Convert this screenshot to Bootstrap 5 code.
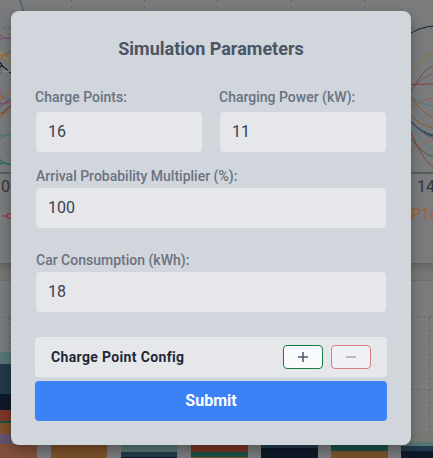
<!DOCTYPE html>
<html lang="en">
<head>
<meta charset="utf-8">
<meta name="viewport" content="width=device-width, initial-scale=1">
<title>Simulation Parameters</title>
<link href="https://cdn.jsdelivr.net/npm/bootstrap@5.3.0/dist/css/bootstrap.min.css" rel="stylesheet">
<style>
body{font-family:Roboto,"Liberation Sans",sans-serif;background:#797b7c;height:458px;overflow:hidden}
.backdrop-chart{z-index:0;width:433px;height:458px}
.sim-dialog{z-index:1;width:400px;height:434px;margin:11px 0 0 11px;padding:24px;background:#d1d5dc;border-radius:8px;box-shadow:0 5px 12px rgba(0,0,0,.32)}
.sim-title{font-size:18px;line-height:28px;color:#4b5563;margin-bottom:24px}
.sim-label{display:block;font-size:14px;line-height:20px;font-weight:500;color:#6b7280}
.pair .sim-label{margin:0 0 5px -1px}
.wide-field{padding:0 1px}
.wide-field .sim-label{line-height:18px;padding-bottom:3px}
.sim-input,.sim-input:focus{height:40px;padding:0 12px;border:0;border-radius:4px;background:#e5e7eb;color:#374151;font-size:16px;line-height:40px;box-shadow:none}
.pair{gap:18px;padding:0 1px}
.arrival-field{margin-top:15px}
.car-field{margin-top:23px}
.config-row{height:40px;margin-top:25px;padding:0 16px;background:#e5e7eb;border-radius:4px}
.config-name{font-size:14px;color:#1f2937;letter-spacing:.35px}
.step-btn{width:40px;height:24px;padding:0;border-radius:4px;background:#f9fafb;display:flex;align-items:center;justify-content:center}
.step-plus{border:1px solid #15803d}
.step-minus,.step-minus:disabled{border:1px solid #d97d80;background:#f0f1f4;opacity:1}
.submit-btn,.submit-btn:hover{height:40px;margin-top:4px;padding:0;border:0;border-radius:4px;background:#3b82f6;color:#fff;font-size:16px;font-weight:700}
</style>
<script src="https://cdn.jsdelivr.net/npm/bootstrap@5.3.0/dist/js/bootstrap.bundle.min.js"></script>
</head>
<body class="position-relative">
<svg class="backdrop-chart position-absolute top-0 start-0" viewBox="0 0 433 458" aria-hidden="true" fill="none" font-family="Roboto, sans-serif">
  <defs><linearGradient id="gap" x2="0" y2="1"><stop stop-color="#686868"/><stop offset=".5" stop-color="#757574"/><stop offset="1" stop-color="#777776"/></linearGradient></defs>
  <path fill="#797b7c" d="M0 0H433V458H0z"/>
  <path fill="url(#gap)" d="M0 264H433V280H0z"/><path stroke="#626465" d="M0 263.500H433"/><path stroke="#6b6d6e" d="M0 280.500H433"/>
  <g stroke="#65686a" stroke-dasharray="3 3"><path d="M71.500 0V12M144.500 0V12M217.500 0V12M291.500 0V12M364.500 0V12M2 28.500H12M411 28.500H433M2 317H12M411 317H433M9.500 317V350M429.500 317V433M411 389.500H433"/></g>
  <path stroke="#315064" d="M19 -2L24 12"/>
  <!-- left edge series -->
  <g stroke-width="1.300">
    <path stroke="#795277" d="M0 37.500L12 38.500"/>
    <path stroke="#4e7779" d="M0 58L12 51M0 137L12 134"/>
    <path stroke="#9a8c32" d="M0 53L12 64"/>
    <path stroke="#a36435" d="M0 57L12 53M0 99L12 91M0 115L12 110"/>
    <path stroke="#111c35" d="M0 64L12 74"/>
    <path stroke="#8b8b8b" d="M0 71.500L12 71"/>
    <path stroke="#517d81" d="M0 91L12 102"/>
    <path stroke="#9a5961" d="M0 95L12 105M0 104L12 103"/>
    <path stroke="#67517b" d="M0 106L12 99"/>
    <path stroke="#6d483b" d="M0 115L12 105"/>
    <path stroke="#1a7064" d="M0 162L12 165"/>
    <g fill="#808283">
      <circle cx="-1" cy="37.500" r="2.500" stroke="#795277"/><circle cx="-1" cy="53" r="2.500" stroke="#9a8c32"/>
      <circle cx="-1" cy="57" r="2.500" stroke="#a36435"/><circle cx="-1" cy="65" r="2.500" stroke="#111c35"/>
      <circle cx="-1" cy="71.500" r="2.500" stroke="#606365"/><circle cx="-1" cy="92" r="2.500" stroke="#9a5961"/>
      <circle cx="-1" cy="98" r="2.500" stroke="#a36435"/><circle cx="-1" cy="105" r="2.500" stroke="#795277"/>
      <circle cx="-1" cy="115" r="2.500" stroke="#9a5931"/><circle cx="-1" cy="137" r="2.500" stroke="#4e7779"/>
      <circle cx="-1" cy="162" r="2.500" stroke="#1a7064"/>
    </g>
    <path stroke="#963f47" stroke-width="1.500" d="M2 216H7"/><circle cx="9.500" cy="216" r="2.500" stroke="#963f47"/>
  </g>
  <!-- right edge series -->
  <g>
    <path stroke="#17243a" d="M408 35Q420 27 433 26"/>
    <path stroke="#8c722b" d="M409 73Q423 56 433 54"/>
    <path stroke="#6d483b" d="M410 93Q424 68 433 66"/>
    <path stroke="#795277" d="M410 91Q424 75 433 74"/>
    <path stroke="#883b3e" d="M410 84.500L433 84"/>
    <path stroke="#9a6145" d="M410 109Q424 98 433 98"/>
    <path stroke="#4e7779" d="M410 98Q422 105 433 106"/>
    <path stroke="#8b592f" d="M410 96Q423 114 433 117"/>
    <path stroke="#6f7173" d="M410 100Q424 125 433 128"/>
    <path stroke="#8b592f" d="M410 115Q422 126 433 128"/>
    <path stroke="#243852" d="M410 120Q422 134 433 136"/>
    <path stroke="#155a67" d="M410 122Q422 132 433 135"/>
    <path stroke="#5c4c7e" d="M410 121Q422 134 433 138"/>
    <path stroke="#4e8281" d="M410 120Q423 148 433 149"/>
    <path stroke="#9b6269" d="M410 150Q421 142 433 140"/>
    <path stroke="#346737" d="M410 138Q423 154 433 157"/>
    <path stroke="#883f31" d="M410 131Q424 162 433 167"/>
  </g>
  <path stroke="#4e5052" stroke-width="1.600" d="M0 173H433"/>
  <text x="1" y="192" font-size="16" fill="#343638">00</text>
  <text x="417" y="192" font-size="16" fill="#343638">14</text>
  <text x="411" y="220" font-size="16" fill="#a3622e">P14</text>
  <!-- stacked bars -->
  <path fill="#567474" d="M0 352H12V364H0z"/><path fill="#22394b" d="M0 364H12V394H0z"/>
  <path fill="#101929" d="M0 394H12V410H0z"/><path fill="#793727" d="M0 410H12V421H0z"/>
  <path fill="#1a5146" d="M0 421H12V423H0z"/><path fill="#7b522c" d="M0 423H12V434H0z"/>
  <path fill="#62536f" d="M0 434H12V444H0z"/><path fill="#824f3d" d="M0 444H37V458H0z"/>
  <path fill="#7b522c" d="M51 440H107V458H51z"/>
  <path fill="#567474" d="M121 440H177V452H121z"/><path fill="#22394b" d="M121 452H177V457H121z"/><path fill="#101929" d="M121 457H177V458H121z"/>
  <path fill="#793727" d="M191 440H248V452H191z"/><path fill="#1a5146" d="M191 452H248V457H191z"/><path fill="#7b522c" d="M191 457H248V458H191z"/>
  <path fill="#22394b" d="M261 440H318V448H261z"/><path fill="#101929" d="M261 448H318V458H261z"/>
  <path fill="#1a5146" d="M331 440H388V451H331z"/><path fill="#7b522c" d="M331 451H388V458H331z"/>
  <path fill="#767a70" d="M401 433H433V442H401z"/><path fill="#567474" d="M401 442H433V446H401z"/>
  <path fill="#22394b" d="M401 446H433V451H401z"/><path fill="#101929" d="M401 451H433V458H401z"/>
</svg>

<main class="sim-dialog position-relative">
  <h1 class="sim-title fw-bold text-center">Simulation Parameters</h1>
  <form>
    <div class="pair d-flex">
      <div class="flex-fill w-50">
        <label class="sim-label" for="points">Charge Points:</label>
        <input class="sim-input form-control" id="points" value="16">
      </div>
      <div class="flex-fill w-50">
        <label class="sim-label" for="power">Charging Power (kW):</label>
        <input class="sim-input form-control" id="power" value="11">
      </div>
    </div>
    <div class="wide-field arrival-field">
      <label class="sim-label" for="arrival">Arrival Probability Multiplier (%):</label>
      <input class="sim-input form-control" id="arrival" value="100">
    </div>
    <div class="wide-field car-field">
      <label class="sim-label" for="car">Car Consumption (kWh):</label>
      <input class="sim-input form-control" id="car" value="18">
    </div>
    <div class="config-row d-flex align-items-center">
      <span class="config-name fw-bold me-auto">Charge Point Config</span>
      <div class="d-flex gap-2">
        <button type="button" class="step-btn step-plus btn" aria-label="Add"><svg width="12" height="12" stroke="#4b5563" stroke-width="1.500"><path d="M1 6H11M6 1V11"/></svg></button>
        <button type="button" class="step-btn step-minus btn" aria-label="Remove" disabled><svg width="12" height="12" stroke="#a5a8af" stroke-width="1.500"><path d="M1 6H11"/></svg></button>
      </div>
    </div>
    <button type="button" class="submit-btn btn w-100 d-block">Submit</button>
  </form>
</main>
</body>
</html>
